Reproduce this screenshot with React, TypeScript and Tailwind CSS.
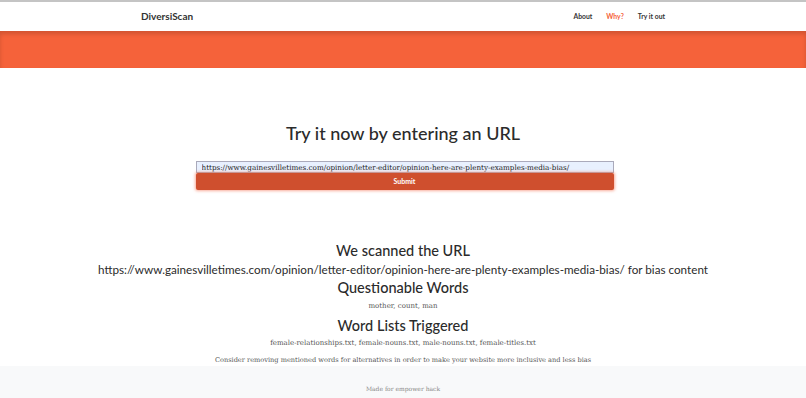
const url = "https://www.gainesvilletimes.com/opinion/letter-editor/opinion-here-are-plenty-examples-media-bias/";

const headFont = "font-['Lato','Open_Sans',sans-serif]";
const serifFont = "font-['DejaVu_Serif','Liberation_Serif',serif]";

export default function App() {
  return (
    <div className="min-h-[398px] bg-white text-[#333] flex flex-col">
      <nav className="h-[31px] border-t-2 border-[#c4c4c4] bg-white">
        <div className={`w-[524px] mx-auto h-full flex items-center justify-between ${headFont}`}>
          <span className="text-[10px] font-bold text-[#333]">DiversiScan</span>
          <div className="flex gap-[14px] text-[6.8px] font-bold">
            <span className="text-[#333]">About</span>
            <span className="text-[#f5623a]">Why?</span>
            <span className="text-[#333]">Try it out</span>
          </div>
        </div>
      </nav>
      <div className="h-[37px] bg-[#f5623a] shadow-[inset_0_3px_4px_rgba(0,0,0,0.15)]" />

      <section className="flex flex-col items-center pt-[52px]">
        <h1 className={`${headFont} text-[18px] leading-[26px] font-medium text-[#2b2b2b]`}>Try it now by entering an URL</h1>
        <form className="mt-[15px] ml-[3px] w-[418px] flex flex-col">
          <input
            readOnly
            value={url}
            className={`${serifFont} h-[12px] w-full bg-[#e8f0fe] border border-[#aab] px-[5px] text-[7.2px] text-[#222] outline-none`}
          />
          <button
            type="button"
            className={`${headFont} h-[17px] w-full bg-[#cf4f2e] text-white text-[7px] font-bold rounded-[2px] shadow-[0_0_3px_1px_rgba(245,120,90,0.6)]`}
          >
            Submit
          </button>
        </form>
      </section>

      <section className="flex flex-col items-center mt-[51px] text-center text-[#2b2b2b]">
        <h2 className={`${headFont} text-[14.5px] leading-[20px] font-medium`}>We scanned the URL</h2>
        <p className={`${headFont} text-[11.7px] leading-[16px]`}>{url} for bias content</p>
        <h2 className={`${headFont} text-[14.5px] leading-[20px] font-medium mt-[1px]`}>Questionable Words</h2>
        <p className={`${serifFont} text-[7px] leading-[14px] text-[#555] mt-[1px]`}>mother, count, man</p>
        <h2 className={`${headFont} text-[14.5px] leading-[20px] font-medium mt-[3px]`}>Word Lists Triggered</h2>
        <p className={`${serifFont} text-[7px] leading-[12px] text-[#555] mt-[1px]`}>
          female-relationships.txt, female-nouns.txt, male-nouns.txt, female-titles.txt
        </p>
        <p className={`${serifFont} text-[6.6px] leading-[12px] text-[#555] mt-[5px]`}>
          Consider removing mentioned words for alternatives in order to make your website more inclusive and less bias
        </p>
      </section>

      <footer className="flex-1 bg-[#f8f9fa] flex items-end justify-center pb-[5px]">
        <span className={`${serifFont} text-[6px] text-[#888]`}>Made for empower hack</span>
      </footer>
    </div>
  );
}
